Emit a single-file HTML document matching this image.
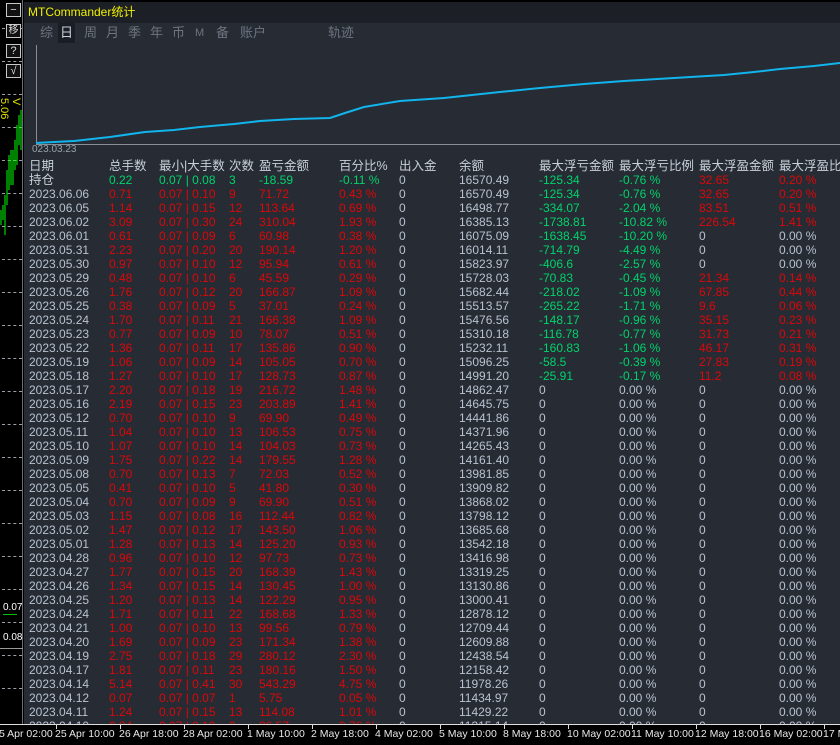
<!DOCTYPE html>
<html><head><meta charset="utf-8"><style>
*{margin:0;padding:0;box-sizing:border-box}
body{width:840px;height:745px;background:#000;overflow:hidden;position:relative;font-family:"Liberation Sans","Noto Sans CJK SC",sans-serif;font-size:12px}
#left{position:absolute;left:0;top:0;width:23px;height:724px;background:#000;border-right:1px solid #6a6f76}
.dash{position:absolute;left:2px;width:20px;border-top:1px dashed #9aa0a8}
.btn{position:absolute;left:6px;width:15px;height:14px;border:1px solid #c8c8c8;color:#ddd;font-size:11px;line-height:12px;text-align:center;background:#111}
#panel{position:absolute;left:24px;top:2px;width:816px;height:722px;background:#262b34}
#title{position:absolute;left:0;top:0;width:816px;height:21px;background:#1c1f25;color:#f0f000;font-size:12px;line-height:20px;padding-left:4px}
#tabs{position:absolute;left:0;top:21px;height:20px;width:816px;color:#6e7580;font-size:13px;line-height:20px}
#tabs span{position:absolute;top:0}
#chart{position:absolute;left:0;top:41px;width:816px;height:112px;background:#262b34}
.r{position:absolute;left:0;height:14px;line-height:14px;white-space:nowrap;width:816px}
.r span{position:absolute;top:0}
.g{color:#b9c2cf}.rd{color:#dc0808}.gr{color:#00d36b}
.h{color:#c8d0da;font-size:12.5px}
#axis{position:absolute;left:0;top:724px;width:840px;height:21px;background:#000;border-top:1px solid #ddd;color:#e8e8e8;font-size:10.5px}
#axis span{position:absolute;top:3px;white-space:nowrap}
.tick{position:absolute;top:0;width:1px;height:4px;background:#ddd}
</style></head><body>
<div id="left">
<div class="dash" style="top:28px"></div><div class="dash" style="top:61px"></div><div class="dash" style="top:94px"></div><div class="dash" style="top:127px"></div><div class="dash" style="top:160px"></div><div class="dash" style="top:193px"></div><div class="dash" style="top:226px"></div><div class="dash" style="top:259px"></div><div class="dash" style="top:292px"></div><div class="dash" style="top:325px"></div><div class="dash" style="top:358px"></div><div class="dash" style="top:391px"></div><div class="dash" style="top:424px"></div><div class="dash" style="top:457px"></div><div class="dash" style="top:490px"></div><div class="dash" style="top:523px"></div><div class="dash" style="top:556px"></div><div class="dash" style="top:589px"></div><div class="dash" style="top:622px"></div><div class="dash" style="top:655px"></div><div class="dash" style="top:688px"></div>
<div class="btn" style="top:3px">−</div>
<div class="btn" style="top:24px;font-size:10px">移</div>
<div class="btn" style="top:44px">?</div>
<div class="btn" style="top:64px">√</div>
<div style="position:absolute;top:98px;color:#e0e000;font-size:11px;transform:rotate(90deg);transform-origin:left top;left:22px">V 5.06</div>
<svg style="position:absolute;left:0;top:100px" width="23" height="140"><g stroke="#00ff00" stroke-width="1">
<line x1="1" y1="110" x2="1" y2="125"/><line x1="3" y1="105" x2="3" y2="120"/><line x1="5" y1="95" x2="5" y2="135"/><line x1="7" y1="70" x2="7" y2="105"/><line x1="9" y1="55" x2="9" y2="90"/><line x1="11" y1="50" x2="11" y2="85"/><line x1="13" y1="50" x2="13" y2="85"/><line x1="15" y1="40" x2="15" y2="70"/><line x1="17" y1="25" x2="17" y2="65"/><line x1="19" y1="15" x2="19" y2="45"/><line x1="21" y1="10" x2="21" y2="50"/></g></svg>
<div style="position:absolute;left:3px;top:602px;color:#fff;font-size:10px">0.07</div>
<div style="position:absolute;left:3px;top:614px;width:14px;border-top:1px solid #00c000"></div>
<div style="position:absolute;left:3px;top:632px;color:#fff;font-size:10px">0.08</div>
<div style="position:absolute;left:0;top:648px;width:23px;border-top:1px solid #999"></div>
</div>
<div id="panel">
<div id="title">MTCommander统计</div>
<div id="tabs">
<span style="left:16px">综</span><span style="background:#1a1e24;color:#c8d0da;padding:0 2px;left:34px">日</span><span style="left:60px">周</span><span style="left:82px">月</span><span style="left:104px">季</span><span style="left:126px">年</span><span style="left:148px">币</span><span style="left:171px;font-size:11px">M</span><span style="left:192px">备</span><span style="left:216px">账户</span><span style="left:304px">轨迹</span>
</div>
<div id="chart"><svg width="816" height="112">
<line x1="12.5" y1="2" x2="12.5" y2="101" stroke="#8a8f96"/>
<line x1="12" y1="101.5" x2="816" y2="101.5" stroke="#8a8f96"/>
<polyline fill="none" stroke="#12b4ec" stroke-width="2" points="12,100 30,99 50,98 86,94 121,89 150,87 176,84 210,81 236,78 270,76 306,75 321,70 340,64 376,58 420,55 476,49 516,45 560,41 600,38 650,35 700,32 730,29 756,26 790,23 816,20"/>
</svg>
<div style="position:absolute;left:8px;top:101px;color:#9aa2ad;font-size:10px">023.03.23</div></div>
<div style="position:absolute;left:0;top:156px;width:816px;height:566px;overflow:hidden">
<div class="r h" style="top:1px"><span style="left:5px">日期</span><span style="left:85px">总手数</span><span style="left:135px">最小|大手数</span><span style="left:205px">次数</span><span style="left:235px">盈亏金额</span><span style="left:315px">百分比%</span><span style="left:375px">出入金</span><span style="left:435px">余额</span><span style="left:515px">最大浮亏金额</span><span style="left:595px">最大浮亏比例</span><span style="left:675px">最大浮盈金额</span><span style="left:755px">最大浮盈比例</span></div>
<div class="r" style="top:15px"><span class="h" style="left:5px">持仓</span><span class="gr" style="left:85px">0.22</span><span class="gr" style="left:135px">0.07 | 0.08</span><span class="gr" style="left:205px">3</span><span class="gr" style="left:235px">-18.59</span><span class="gr" style="left:315px">-0.11 %</span><span class="g" style="left:375px">0</span><span class="g" style="left:435px">16570.49</span><span class="gr" style="left:515px">-125.34</span><span class="gr" style="left:595px">-0.76 %</span><span class="rd" style="left:675px">32.65</span><span class="rd" style="left:755px">0.20 %</span></div>
<div class="r" style="top:29px"><span class="g" style="left:5px">2023.06.06</span><span class="rd" style="left:85px">0.71</span><span class="rd" style="left:135px">0.07 | 0.10</span><span class="rd" style="left:205px">9</span><span class="rd" style="left:235px">71.72</span><span class="rd" style="left:315px">0.43 %</span><span class="g" style="left:375px">0</span><span class="g" style="left:435px">16570.49</span><span class="gr" style="left:515px">-125.34</span><span class="gr" style="left:595px">-0.76 %</span><span class="rd" style="left:675px">32.65</span><span class="rd" style="left:755px">0.20 %</span></div>
<div class="r" style="top:43px"><span class="g" style="left:5px">2023.06.05</span><span class="rd" style="left:85px">1.14</span><span class="rd" style="left:135px">0.07 | 0.15</span><span class="rd" style="left:205px">12</span><span class="rd" style="left:235px">113.64</span><span class="rd" style="left:315px">0.69 %</span><span class="g" style="left:375px">0</span><span class="g" style="left:435px">16498.77</span><span class="gr" style="left:515px">-334.07</span><span class="gr" style="left:595px">-2.04 %</span><span class="rd" style="left:675px">83.51</span><span class="rd" style="left:755px">0.51 %</span></div>
<div class="r" style="top:57px"><span class="g" style="left:5px">2023.06.02</span><span class="rd" style="left:85px">3.09</span><span class="rd" style="left:135px">0.07 | 0.30</span><span class="rd" style="left:205px">24</span><span class="rd" style="left:235px">310.04</span><span class="rd" style="left:315px">1.93 %</span><span class="g" style="left:375px">0</span><span class="g" style="left:435px">16385.13</span><span class="gr" style="left:515px">-1738.81</span><span class="gr" style="left:595px">-10.82 %</span><span class="rd" style="left:675px">226.54</span><span class="rd" style="left:755px">1.41 %</span></div>
<div class="r" style="top:71px"><span class="g" style="left:5px">2023.06.01</span><span class="rd" style="left:85px">0.61</span><span class="rd" style="left:135px">0.07 | 0.09</span><span class="rd" style="left:205px">6</span><span class="rd" style="left:235px">60.98</span><span class="rd" style="left:315px">0.38 %</span><span class="g" style="left:375px">0</span><span class="g" style="left:435px">16075.09</span><span class="gr" style="left:515px">-1638.45</span><span class="gr" style="left:595px">-10.20 %</span><span class="g" style="left:675px">0</span><span class="g" style="left:755px">0.00 %</span></div>
<div class="r" style="top:85px"><span class="g" style="left:5px">2023.05.31</span><span class="rd" style="left:85px">2.23</span><span class="rd" style="left:135px">0.07 | 0.20</span><span class="rd" style="left:205px">20</span><span class="rd" style="left:235px">190.14</span><span class="rd" style="left:315px">1.20 %</span><span class="g" style="left:375px">0</span><span class="g" style="left:435px">16014.11</span><span class="gr" style="left:515px">-714.79</span><span class="gr" style="left:595px">-4.49 %</span><span class="g" style="left:675px">0</span><span class="g" style="left:755px">0.00 %</span></div>
<div class="r" style="top:99px"><span class="g" style="left:5px">2023.05.30</span><span class="rd" style="left:85px">0.97</span><span class="rd" style="left:135px">0.07 | 0.10</span><span class="rd" style="left:205px">12</span><span class="rd" style="left:235px">95.94</span><span class="rd" style="left:315px">0.61 %</span><span class="g" style="left:375px">0</span><span class="g" style="left:435px">15823.97</span><span class="gr" style="left:515px">-406.6</span><span class="gr" style="left:595px">-2.57 %</span><span class="g" style="left:675px">0</span><span class="g" style="left:755px">0.00 %</span></div>
<div class="r" style="top:113px"><span class="g" style="left:5px">2023.05.29</span><span class="rd" style="left:85px">0.48</span><span class="rd" style="left:135px">0.07 | 0.10</span><span class="rd" style="left:205px">6</span><span class="rd" style="left:235px">45.59</span><span class="rd" style="left:315px">0.29 %</span><span class="g" style="left:375px">0</span><span class="g" style="left:435px">15728.03</span><span class="gr" style="left:515px">-70.83</span><span class="gr" style="left:595px">-0.45 %</span><span class="rd" style="left:675px">21.34</span><span class="rd" style="left:755px">0.14 %</span></div>
<div class="r" style="top:127px"><span class="g" style="left:5px">2023.05.26</span><span class="rd" style="left:85px">1.76</span><span class="rd" style="left:135px">0.07 | 0.12</span><span class="rd" style="left:205px">20</span><span class="rd" style="left:235px">166.87</span><span class="rd" style="left:315px">1.09 %</span><span class="g" style="left:375px">0</span><span class="g" style="left:435px">15682.44</span><span class="gr" style="left:515px">-218.02</span><span class="gr" style="left:595px">-1.09 %</span><span class="rd" style="left:675px">67.85</span><span class="rd" style="left:755px">0.44 %</span></div>
<div class="r" style="top:141px"><span class="g" style="left:5px">2023.05.25</span><span class="rd" style="left:85px">0.38</span><span class="rd" style="left:135px">0.07 | 0.09</span><span class="rd" style="left:205px">5</span><span class="rd" style="left:235px">37.01</span><span class="rd" style="left:315px">0.24 %</span><span class="g" style="left:375px">0</span><span class="g" style="left:435px">15513.57</span><span class="gr" style="left:515px">-265.22</span><span class="gr" style="left:595px">-1.71 %</span><span class="rd" style="left:675px">9.6</span><span class="rd" style="left:755px">0.06 %</span></div>
<div class="r" style="top:155px"><span class="g" style="left:5px">2023.05.24</span><span class="rd" style="left:85px">1.70</span><span class="rd" style="left:135px">0.07 | 0.11</span><span class="rd" style="left:205px">21</span><span class="rd" style="left:235px">166.38</span><span class="rd" style="left:315px">1.09 %</span><span class="g" style="left:375px">0</span><span class="g" style="left:435px">15476.56</span><span class="gr" style="left:515px">-148.17</span><span class="gr" style="left:595px">-0.96 %</span><span class="rd" style="left:675px">35.15</span><span class="rd" style="left:755px">0.23 %</span></div>
<div class="r" style="top:169px"><span class="g" style="left:5px">2023.05.23</span><span class="rd" style="left:85px">0.77</span><span class="rd" style="left:135px">0.07 | 0.09</span><span class="rd" style="left:205px">10</span><span class="rd" style="left:235px">78.07</span><span class="rd" style="left:315px">0.51 %</span><span class="g" style="left:375px">0</span><span class="g" style="left:435px">15310.18</span><span class="gr" style="left:515px">-116.78</span><span class="gr" style="left:595px">-0.77 %</span><span class="rd" style="left:675px">31.73</span><span class="rd" style="left:755px">0.21 %</span></div>
<div class="r" style="top:183px"><span class="g" style="left:5px">2023.05.22</span><span class="rd" style="left:85px">1.36</span><span class="rd" style="left:135px">0.07 | 0.11</span><span class="rd" style="left:205px">17</span><span class="rd" style="left:235px">135.86</span><span class="rd" style="left:315px">0.90 %</span><span class="g" style="left:375px">0</span><span class="g" style="left:435px">15232.11</span><span class="gr" style="left:515px">-160.83</span><span class="gr" style="left:595px">-1.06 %</span><span class="rd" style="left:675px">46.17</span><span class="rd" style="left:755px">0.31 %</span></div>
<div class="r" style="top:197px"><span class="g" style="left:5px">2023.05.19</span><span class="rd" style="left:85px">1.06</span><span class="rd" style="left:135px">0.07 | 0.09</span><span class="rd" style="left:205px">14</span><span class="rd" style="left:235px">105.05</span><span class="rd" style="left:315px">0.70 %</span><span class="g" style="left:375px">0</span><span class="g" style="left:435px">15096.25</span><span class="gr" style="left:515px">-58.5</span><span class="gr" style="left:595px">-0.39 %</span><span class="rd" style="left:675px">27.83</span><span class="rd" style="left:755px">0.19 %</span></div>
<div class="r" style="top:211px"><span class="g" style="left:5px">2023.05.18</span><span class="rd" style="left:85px">1.27</span><span class="rd" style="left:135px">0.07 | 0.10</span><span class="rd" style="left:205px">17</span><span class="rd" style="left:235px">128.73</span><span class="rd" style="left:315px">0.87 %</span><span class="g" style="left:375px">0</span><span class="g" style="left:435px">14991.20</span><span class="gr" style="left:515px">-25.91</span><span class="gr" style="left:595px">-0.17 %</span><span class="rd" style="left:675px">11.2</span><span class="rd" style="left:755px">0.08 %</span></div>
<div class="r" style="top:225px"><span class="g" style="left:5px">2023.05.17</span><span class="rd" style="left:85px">2.20</span><span class="rd" style="left:135px">0.07 | 0.18</span><span class="rd" style="left:205px">19</span><span class="rd" style="left:235px">216.72</span><span class="rd" style="left:315px">1.48 %</span><span class="g" style="left:375px">0</span><span class="g" style="left:435px">14862.47</span><span class="g" style="left:515px">0</span><span class="g" style="left:595px">0.00 %</span><span class="g" style="left:675px">0</span><span class="g" style="left:755px">0.00 %</span></div>
<div class="r" style="top:239px"><span class="g" style="left:5px">2023.05.16</span><span class="rd" style="left:85px">2.19</span><span class="rd" style="left:135px">0.07 | 0.15</span><span class="rd" style="left:205px">23</span><span class="rd" style="left:235px">203.89</span><span class="rd" style="left:315px">1.41 %</span><span class="g" style="left:375px">0</span><span class="g" style="left:435px">14645.75</span><span class="g" style="left:515px">0</span><span class="g" style="left:595px">0.00 %</span><span class="g" style="left:675px">0</span><span class="g" style="left:755px">0.00 %</span></div>
<div class="r" style="top:253px"><span class="g" style="left:5px">2023.05.12</span><span class="rd" style="left:85px">0.70</span><span class="rd" style="left:135px">0.07 | 0.10</span><span class="rd" style="left:205px">9</span><span class="rd" style="left:235px">69.90</span><span class="rd" style="left:315px">0.49 %</span><span class="g" style="left:375px">0</span><span class="g" style="left:435px">14441.86</span><span class="g" style="left:515px">0</span><span class="g" style="left:595px">0.00 %</span><span class="g" style="left:675px">0</span><span class="g" style="left:755px">0.00 %</span></div>
<div class="r" style="top:267px"><span class="g" style="left:5px">2023.05.11</span><span class="rd" style="left:85px">1.04</span><span class="rd" style="left:135px">0.07 | 0.10</span><span class="rd" style="left:205px">13</span><span class="rd" style="left:235px">106.53</span><span class="rd" style="left:315px">0.75 %</span><span class="g" style="left:375px">0</span><span class="g" style="left:435px">14371.96</span><span class="g" style="left:515px">0</span><span class="g" style="left:595px">0.00 %</span><span class="g" style="left:675px">0</span><span class="g" style="left:755px">0.00 %</span></div>
<div class="r" style="top:281px"><span class="g" style="left:5px">2023.05.10</span><span class="rd" style="left:85px">1.07</span><span class="rd" style="left:135px">0.07 | 0.10</span><span class="rd" style="left:205px">14</span><span class="rd" style="left:235px">104.03</span><span class="rd" style="left:315px">0.73 %</span><span class="g" style="left:375px">0</span><span class="g" style="left:435px">14265.43</span><span class="g" style="left:515px">0</span><span class="g" style="left:595px">0.00 %</span><span class="g" style="left:675px">0</span><span class="g" style="left:755px">0.00 %</span></div>
<div class="r" style="top:295px"><span class="g" style="left:5px">2023.05.09</span><span class="rd" style="left:85px">1.75</span><span class="rd" style="left:135px">0.07 | 0.22</span><span class="rd" style="left:205px">14</span><span class="rd" style="left:235px">179.55</span><span class="rd" style="left:315px">1.28 %</span><span class="g" style="left:375px">0</span><span class="g" style="left:435px">14161.40</span><span class="g" style="left:515px">0</span><span class="g" style="left:595px">0.00 %</span><span class="g" style="left:675px">0</span><span class="g" style="left:755px">0.00 %</span></div>
<div class="r" style="top:309px"><span class="g" style="left:5px">2023.05.08</span><span class="rd" style="left:85px">0.70</span><span class="rd" style="left:135px">0.07 | 0.13</span><span class="rd" style="left:205px">7</span><span class="rd" style="left:235px">72.03</span><span class="rd" style="left:315px">0.52 %</span><span class="g" style="left:375px">0</span><span class="g" style="left:435px">13981.85</span><span class="g" style="left:515px">0</span><span class="g" style="left:595px">0.00 %</span><span class="g" style="left:675px">0</span><span class="g" style="left:755px">0.00 %</span></div>
<div class="r" style="top:323px"><span class="g" style="left:5px">2023.05.05</span><span class="rd" style="left:85px">0.41</span><span class="rd" style="left:135px">0.07 | 0.10</span><span class="rd" style="left:205px">5</span><span class="rd" style="left:235px">41.80</span><span class="rd" style="left:315px">0.30 %</span><span class="g" style="left:375px">0</span><span class="g" style="left:435px">13909.82</span><span class="g" style="left:515px">0</span><span class="g" style="left:595px">0.00 %</span><span class="g" style="left:675px">0</span><span class="g" style="left:755px">0.00 %</span></div>
<div class="r" style="top:337px"><span class="g" style="left:5px">2023.05.04</span><span class="rd" style="left:85px">0.70</span><span class="rd" style="left:135px">0.07 | 0.09</span><span class="rd" style="left:205px">9</span><span class="rd" style="left:235px">69.90</span><span class="rd" style="left:315px">0.51 %</span><span class="g" style="left:375px">0</span><span class="g" style="left:435px">13868.02</span><span class="g" style="left:515px">0</span><span class="g" style="left:595px">0.00 %</span><span class="g" style="left:675px">0</span><span class="g" style="left:755px">0.00 %</span></div>
<div class="r" style="top:351px"><span class="g" style="left:5px">2023.05.03</span><span class="rd" style="left:85px">1.15</span><span class="rd" style="left:135px">0.07 | 0.08</span><span class="rd" style="left:205px">16</span><span class="rd" style="left:235px">112.44</span><span class="rd" style="left:315px">0.82 %</span><span class="g" style="left:375px">0</span><span class="g" style="left:435px">13798.12</span><span class="g" style="left:515px">0</span><span class="g" style="left:595px">0.00 %</span><span class="g" style="left:675px">0</span><span class="g" style="left:755px">0.00 %</span></div>
<div class="r" style="top:365px"><span class="g" style="left:5px">2023.05.02</span><span class="rd" style="left:85px">1.47</span><span class="rd" style="left:135px">0.07 | 0.12</span><span class="rd" style="left:205px">17</span><span class="rd" style="left:235px">143.50</span><span class="rd" style="left:315px">1.06 %</span><span class="g" style="left:375px">0</span><span class="g" style="left:435px">13685.68</span><span class="g" style="left:515px">0</span><span class="g" style="left:595px">0.00 %</span><span class="g" style="left:675px">0</span><span class="g" style="left:755px">0.00 %</span></div>
<div class="r" style="top:379px"><span class="g" style="left:5px">2023.05.01</span><span class="rd" style="left:85px">1.28</span><span class="rd" style="left:135px">0.07 | 0.13</span><span class="rd" style="left:205px">14</span><span class="rd" style="left:235px">125.20</span><span class="rd" style="left:315px">0.93 %</span><span class="g" style="left:375px">0</span><span class="g" style="left:435px">13542.18</span><span class="g" style="left:515px">0</span><span class="g" style="left:595px">0.00 %</span><span class="g" style="left:675px">0</span><span class="g" style="left:755px">0.00 %</span></div>
<div class="r" style="top:393px"><span class="g" style="left:5px">2023.04.28</span><span class="rd" style="left:85px">0.96</span><span class="rd" style="left:135px">0.07 | 0.10</span><span class="rd" style="left:205px">12</span><span class="rd" style="left:235px">97.73</span><span class="rd" style="left:315px">0.73 %</span><span class="g" style="left:375px">0</span><span class="g" style="left:435px">13416.98</span><span class="g" style="left:515px">0</span><span class="g" style="left:595px">0.00 %</span><span class="g" style="left:675px">0</span><span class="g" style="left:755px">0.00 %</span></div>
<div class="r" style="top:407px"><span class="g" style="left:5px">2023.04.27</span><span class="rd" style="left:85px">1.77</span><span class="rd" style="left:135px">0.07 | 0.15</span><span class="rd" style="left:205px">20</span><span class="rd" style="left:235px">168.39</span><span class="rd" style="left:315px">1.43 %</span><span class="g" style="left:375px">0</span><span class="g" style="left:435px">13319.25</span><span class="g" style="left:515px">0</span><span class="g" style="left:595px">0.00 %</span><span class="g" style="left:675px">0</span><span class="g" style="left:755px">0.00 %</span></div>
<div class="r" style="top:421px"><span class="g" style="left:5px">2023.04.26</span><span class="rd" style="left:85px">1.34</span><span class="rd" style="left:135px">0.07 | 0.15</span><span class="rd" style="left:205px">14</span><span class="rd" style="left:235px">130.45</span><span class="rd" style="left:315px">1.00 %</span><span class="g" style="left:375px">0</span><span class="g" style="left:435px">13130.86</span><span class="g" style="left:515px">0</span><span class="g" style="left:595px">0.00 %</span><span class="g" style="left:675px">0</span><span class="g" style="left:755px">0.00 %</span></div>
<div class="r" style="top:435px"><span class="g" style="left:5px">2023.04.25</span><span class="rd" style="left:85px">1.20</span><span class="rd" style="left:135px">0.07 | 0.13</span><span class="rd" style="left:205px">14</span><span class="rd" style="left:235px">122.29</span><span class="rd" style="left:315px">0.95 %</span><span class="g" style="left:375px">0</span><span class="g" style="left:435px">13000.41</span><span class="g" style="left:515px">0</span><span class="g" style="left:595px">0.00 %</span><span class="g" style="left:675px">0</span><span class="g" style="left:755px">0.00 %</span></div>
<div class="r" style="top:449px"><span class="g" style="left:5px">2023.04.24</span><span class="rd" style="left:85px">1.71</span><span class="rd" style="left:135px">0.07 | 0.11</span><span class="rd" style="left:205px">22</span><span class="rd" style="left:235px">168.68</span><span class="rd" style="left:315px">1.33 %</span><span class="g" style="left:375px">0</span><span class="g" style="left:435px">12878.12</span><span class="g" style="left:515px">0</span><span class="g" style="left:595px">0.00 %</span><span class="g" style="left:675px">0</span><span class="g" style="left:755px">0.00 %</span></div>
<div class="r" style="top:463px"><span class="g" style="left:5px">2023.04.21</span><span class="rd" style="left:85px">1.00</span><span class="rd" style="left:135px">0.07 | 0.10</span><span class="rd" style="left:205px">13</span><span class="rd" style="left:235px">99.56</span><span class="rd" style="left:315px">0.79 %</span><span class="g" style="left:375px">0</span><span class="g" style="left:435px">12709.44</span><span class="g" style="left:515px">0</span><span class="g" style="left:595px">0.00 %</span><span class="g" style="left:675px">0</span><span class="g" style="left:755px">0.00 %</span></div>
<div class="r" style="top:477px"><span class="g" style="left:5px">2023.04.20</span><span class="rd" style="left:85px">1.69</span><span class="rd" style="left:135px">0.07 | 0.09</span><span class="rd" style="left:205px">23</span><span class="rd" style="left:235px">171.34</span><span class="rd" style="left:315px">1.38 %</span><span class="g" style="left:375px">0</span><span class="g" style="left:435px">12609.88</span><span class="g" style="left:515px">0</span><span class="g" style="left:595px">0.00 %</span><span class="g" style="left:675px">0</span><span class="g" style="left:755px">0.00 %</span></div>
<div class="r" style="top:491px"><span class="g" style="left:5px">2023.04.19</span><span class="rd" style="left:85px">2.75</span><span class="rd" style="left:135px">0.07 | 0.18</span><span class="rd" style="left:205px">29</span><span class="rd" style="left:235px">280.12</span><span class="rd" style="left:315px">2.30 %</span><span class="g" style="left:375px">0</span><span class="g" style="left:435px">12438.54</span><span class="g" style="left:515px">0</span><span class="g" style="left:595px">0.00 %</span><span class="g" style="left:675px">0</span><span class="g" style="left:755px">0.00 %</span></div>
<div class="r" style="top:505px"><span class="g" style="left:5px">2023.04.17</span><span class="rd" style="left:85px">1.81</span><span class="rd" style="left:135px">0.07 | 0.11</span><span class="rd" style="left:205px">23</span><span class="rd" style="left:235px">180.16</span><span class="rd" style="left:315px">1.50 %</span><span class="g" style="left:375px">0</span><span class="g" style="left:435px">12158.42</span><span class="g" style="left:515px">0</span><span class="g" style="left:595px">0.00 %</span><span class="g" style="left:675px">0</span><span class="g" style="left:755px">0.00 %</span></div>
<div class="r" style="top:519px"><span class="g" style="left:5px">2023.04.14</span><span class="rd" style="left:85px">5.14</span><span class="rd" style="left:135px">0.07 | 0.41</span><span class="rd" style="left:205px">30</span><span class="rd" style="left:235px">543.29</span><span class="rd" style="left:315px">4.75 %</span><span class="g" style="left:375px">0</span><span class="g" style="left:435px">11978.26</span><span class="g" style="left:515px">0</span><span class="g" style="left:595px">0.00 %</span><span class="g" style="left:675px">0</span><span class="g" style="left:755px">0.00 %</span></div>
<div class="r" style="top:533px"><span class="g" style="left:5px">2023.04.12</span><span class="rd" style="left:85px">0.07</span><span class="rd" style="left:135px">0.07 | 0.07</span><span class="rd" style="left:205px">1</span><span class="rd" style="left:235px">5.75</span><span class="rd" style="left:315px">0.05 %</span><span class="g" style="left:375px">0</span><span class="g" style="left:435px">11434.97</span><span class="g" style="left:515px">0</span><span class="g" style="left:595px">0.00 %</span><span class="g" style="left:675px">0</span><span class="g" style="left:755px">0.00 %</span></div>
<div class="r" style="top:547px"><span class="g" style="left:5px">2023.04.11</span><span class="rd" style="left:85px">1.24</span><span class="rd" style="left:135px">0.07 | 0.15</span><span class="rd" style="left:205px">13</span><span class="rd" style="left:235px">114.08</span><span class="rd" style="left:315px">1.01 %</span><span class="g" style="left:375px">0</span><span class="g" style="left:435px">11429.22</span><span class="g" style="left:515px">0</span><span class="g" style="left:595px">0.00 %</span><span class="g" style="left:675px">0</span><span class="g" style="left:755px">0.00 %</span></div>
<div class="r" style="top:561px"><span class="g" style="left:5px">2023.04.10</span><span class="rd" style="left:85px">0.84</span><span class="rd" style="left:135px">0.07 | 0.10</span><span class="rd" style="left:205px">9</span><span class="rd" style="left:235px">86.57</span><span class="rd" style="left:315px">0.76 %</span><span class="g" style="left:375px">0</span><span class="g" style="left:435px">11315.14</span><span class="g" style="left:515px">0</span><span class="g" style="left:595px">0.00 %</span><span class="g" style="left:675px">0</span><span class="g" style="left:755px">0.00 %</span></div>
</div>
</div>
<div id="axis">
<div class="tick" style="left:56px"></div><div class="tick" style="left:120px"></div><div class="tick" style="left:184px"></div><div class="tick" style="left:248px"></div><div class="tick" style="left:312px"></div><div class="tick" style="left:376px"></div><div class="tick" style="left:440px"></div><div class="tick" style="left:504px"></div><div class="tick" style="left:568px"></div><div class="tick" style="left:632px"></div><div class="tick" style="left:696px"></div><div class="tick" style="left:760px"></div><div class="tick" style="left:824px"></div>
<span style="left:-1px">5 Apr 02:00</span><span style="left:55px">25 Apr 10:00</span><span style="left:119px">26 Apr 18:00</span><span style="left:183px">28 Apr 02:00</span><span style="left:247px">1 May 10:00</span><span style="left:311px">2 May 18:00</span><span style="left:375px">4 May 02:00</span><span style="left:439px">5 May 10:00</span><span style="left:503px">8 May 18:00</span><span style="left:567px">10 May 02:00</span><span style="left:631px">11 May 10:00</span><span style="left:695px">12 May 18:00</span><span style="left:759px">16 May 02:00</span><span style="left:823px">17 M</span>
</div>
</body></html>
